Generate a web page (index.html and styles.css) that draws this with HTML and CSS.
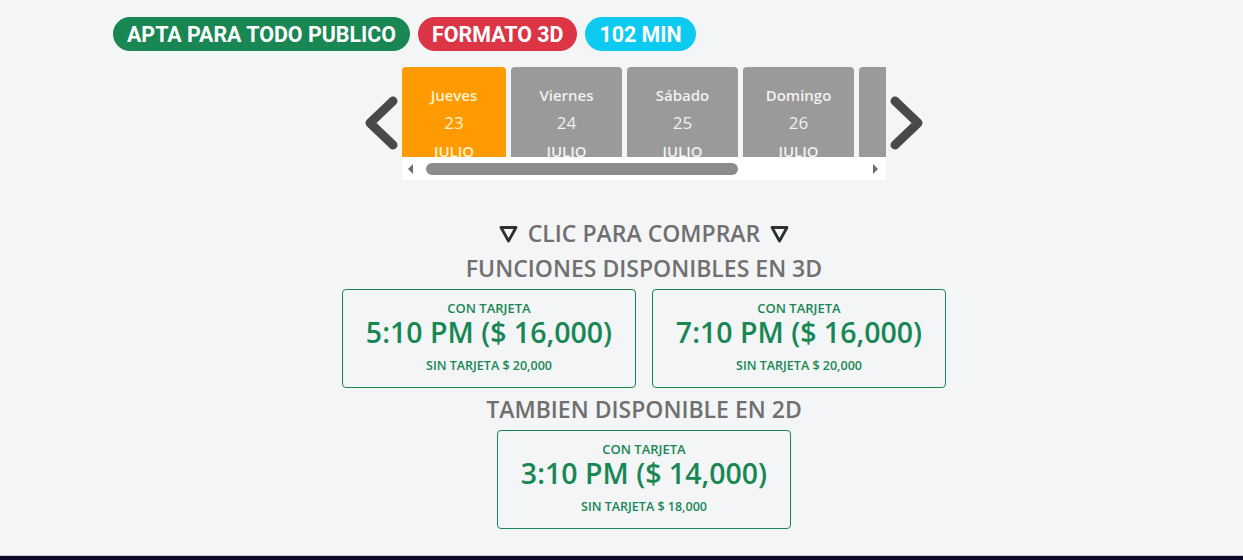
FILE: index.html
```html
<!DOCTYPE html>
<html lang="es">
<head>
<meta charset="utf-8">
<title>Funciones</title>
<link rel="stylesheet" href="styles.css">
</head>
<body>
<main class="page">
  <div class="badges">
    <span class="badge badge-green">APTA PARA TODO PUBLICO</span>
    <span class="badge badge-red">FORMATO 3D</span>
    <span class="badge badge-cyan">102 MIN</span>
  </div>

  <div class="carousel">
    <button class="nav-arrow" aria-label="Anterior">
      <svg width="38" height="56" viewBox="0 0 38 56"><polyline points="31,6 8,28 31,50" fill="none" stroke="#494949" stroke-width="9" stroke-linecap="round" stroke-linejoin="round"/></svg>
    </button>
    <div class="days-wrap">
      <div class="days">
        <div class="day day-active day-first"><span>Jueves</span><span>23</span><span>JULIO</span></div>
        <div class="day"><span>Viernes</span><span>24</span><span>JULIO</span></div>
        <div class="day"><span>Sábado</span><span>25</span><span>JULIO</span></div>
        <div class="day"><span>Domingo</span><span>26</span><span>JULIO</span></div>
        <div class="day"><span>Lunes</span><span>27</span><span>JULIO</span></div>
      </div>
      <div class="scrollbar">
        <span class="sb-arrow sb-left"></span>
        <div class="sb-track"><div class="sb-thumb" style="width: 312px"></div></div>
        <span class="sb-arrow sb-right"></span>
      </div>
    </div>
    <button class="nav-arrow" aria-label="Siguiente">
      <svg width="38" height="56" viewBox="0 0 38 56"><polyline points="7,6 30,28 7,50" fill="none" stroke="#494949" stroke-width="9" stroke-linecap="round" stroke-linejoin="round"/></svg>
    </button>
  </div>

  <h2 class="heading heading-cta">
    <svg class="tri" width="19" height="18" viewBox="0 0 19 18"><polygon points="2,2.5 17,2.5 9.5,16" fill="none" stroke="#2f2f2f" stroke-width="2.8" stroke-linejoin="round"/></svg>
    CLIC PARA COMPRAR
    <svg class="tri" width="19" height="18" viewBox="0 0 19 18"><polygon points="2,2.5 17,2.5 9.5,16" fill="none" stroke="#2f2f2f" stroke-width="2.8" stroke-linejoin="round"/></svg>
  </h2>
  <h2 class="heading">FUNCIONES DISPONIBLES EN 3D</h2>
  <div class="shows">
    <a class="show" href="#">
      <span class="show-label">CON TARJETA</span>
      <span class="show-price">5:10 PM ($ 16,000)</span>
      <span class="show-alt">SIN TARJETA $ 20,000</span>
    </a>
    <a class="show" href="#">
      <span class="show-label">CON TARJETA</span>
      <span class="show-price">7:10 PM ($ 16,000)</span>
      <span class="show-alt">SIN TARJETA $ 20,000</span>
    </a>
  </div>
  <h2 class="heading heading-2d">TAMBIEN DISPONIBLE EN 2D</h2>
  <div class="shows">
    <a class="show" href="#">
      <span class="show-label">CON TARJETA</span>
      <span class="show-price">3:10 PM ($ 14,000)</span>
      <span class="show-alt">SIN TARJETA $ 18,000</span>
    </a>
  </div>
</main>
<footer class="footer"></footer>
</body>
</html>
```

FILE: styles.css
```css
* { box-sizing: border-box; }

html, body {
  margin: 0;
  padding: 0;
  background: #f4f5f6;
  overflow: hidden;
}

body {
  font-family: "Open Sans", "Liberation Sans", sans-serif;
}

.page {
  height: 555px;
  padding: 17px 68px 0 113px;
}

/* status pills */
.badges {
  display: flex;
  gap: 8px;
}

.badge {
  display: inline-flex;
  align-items: center;
  height: 34px;
  padding: 0 14px;
  border-radius: 17px;
  font-family: Roboto, "Liberation Sans", sans-serif;
  font-weight: 700;
  font-size: 21.4px;
  color: #fff;
}

.badge-green { background: #198754; }
.badge-red { background: #dc3545; }
.badge-cyan { background: #0dcaf0; }

/* day picker */
.carousel {
  display: flex;
  justify-content: center;
  align-items: flex-start;
  gap: 2px;
  margin-top: 16px;
}

.nav-arrow {
  border: 0;
  background: none;
  padding: 0;
  margin-top: 28px;
  width: 38px;
  height: 56px;
  cursor: pointer;
}

.nav-arrow svg { display: block; }

.days-wrap {
  width: 484px;
}

.days {
  display: flex;
  gap: 5px;
  height: 90px;
  overflow: hidden;
}

.day {
  flex: 0 0 111px;
  height: 104px;
  border-radius: 4px;
  background: #9a9a9a;
  color: rgba(255, 255, 255, 0.88);
  display: flex;
  flex-direction: column;
  align-items: center;
  padding-top: 14px;
  font-size: 15px;
  font-weight: 600;
  line-height: 28px;
}

.day span:nth-child(2) { font-size: 17px; font-weight: 500; }

.day-first { flex-basis: 104px; }

.day-active {
  background: #ff9a00;
  color: #fff4d2;
}

.scrollbar {
  display: flex;
  align-items: center;
  height: 23px;
  background: #fff;
  padding: 0 0 0 6px;
}

.sb-arrow {
  width: 0;
  height: 0;
  border-top: 5px solid transparent;
  border-bottom: 5px solid transparent;
}

.sb-left {
  border-right: 5px solid #6e6e6e;
}

.sb-right {
  border-left: 5px solid #6e6e6e;
  margin-right: 8px;
}

.sb-track {
  flex: 1;
  padding: 0 12px 0 13px;
}

.sb-thumb {
  height: 12px;
  border-radius: 6px;
  background: #8c8c8c;
}

/* showtimes */
.heading {
  margin: 0;
  text-align: center;
  font-size: 23px;
  font-weight: 600;
  line-height: 35px;
  color: #707070;
}

.heading-cta {
  margin-top: 36px;
  display: flex;
  justify-content: center;
  align-items: center;
  gap: 10px;
}

.heading-cta .tri { margin-top: 1px; }

.heading-2d { margin-top: 4px; }

.shows {
  display: flex;
  justify-content: center;
  gap: 16px;
  margin-top: 3px;
}

.show {
  width: 294px;
  height: 99px;
  border: 1.5px solid #198754;
  border-radius: 4px;
  display: flex;
  flex-direction: column;
  align-items: center;
  padding-top: 10px;
  color: #198754;
  text-decoration: none;
}

.show-label {
  font-size: 13px;
  font-weight: 600;
  line-height: 17px;
}

.show-price {
  font-size: 28.5px;
  font-weight: 600;
  line-height: 31px;
}

.show-alt {
  margin-top: 9px;
  font-size: 12.5px;
  font-weight: 600;
  line-height: 17px;
}

.footer {
  height: 5px;
  border-top: 1px solid #c9c8dc;
  background: #0c0826;
}
```
